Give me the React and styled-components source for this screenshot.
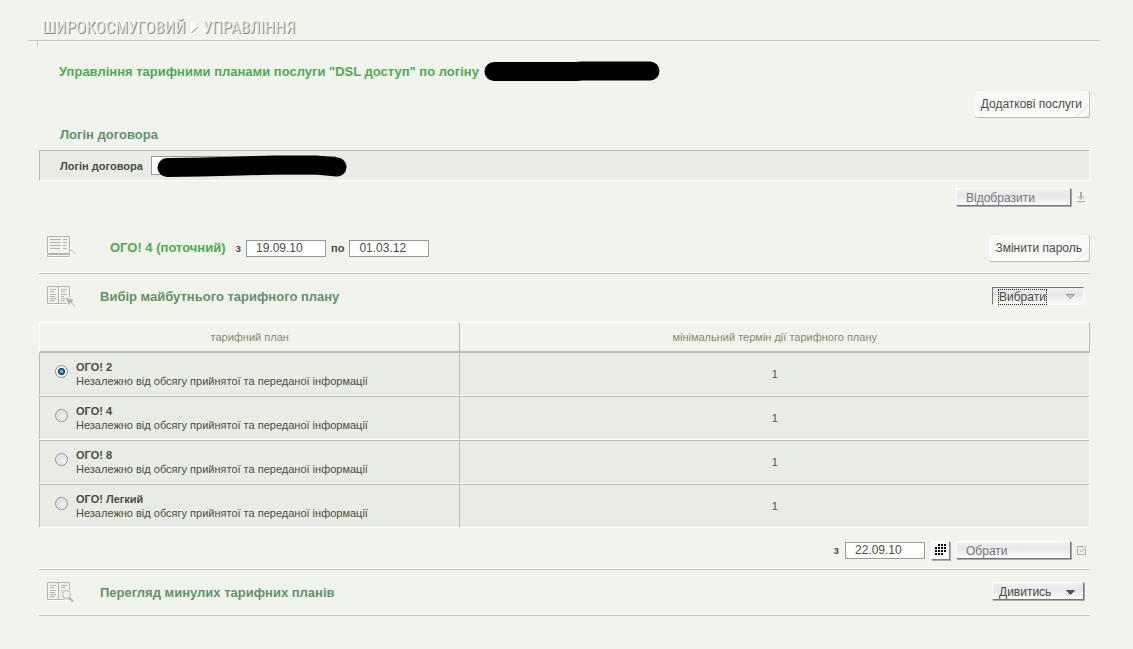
import React, { useState } from "react";
import styled, { createGlobalStyle } from "styled-components";

const GlobalStyle = createGlobalStyle`
  * {
    box-sizing: border-box;
  }
  body {
    margin: 0;
    background: #f1f4ed;
    color: #4c4c41;
    font-family: "Liberation Sans", Arial, sans-serif;
    font-size: 12px;
  }
  button,
  input {
    font-family: inherit;
  }
`;

const Page = styled.div`
  padding: 16px 33px 0 28px;
`;

const Crumbs = styled.nav`
  display: flex;
  align-items: center;
  gap: 5px;
  height: 25px;
  padding: 0 0 3px 14px;
  border-bottom: 1px solid #c3c7bf;
  box-shadow: 0 1px 0 #fff;
`;

const Crumb = styled.a`
  font-family: "Roboto Condensed", Roboto, sans-serif;
  font-size: 17px;
  font-weight: 400;
  line-height: 20px;
  color: #e4e6df;
  text-decoration: none;
  text-transform: uppercase;
  text-shadow: 1px 1px 0 #8b8d7e, -1px -1px 0 #fff;
`;

const Notch = styled.div`
  width: 2px;
  height: 6px;
  margin-left: 9px;
  background: #fff;
  border-left: 1px solid #c3c7bf;
`;

const Content = styled.main`
  margin: 0 10px 0 11px;
`;

const PageTitle = styled.h1`
  display: flex;
  align-items: center;
  gap: 5px;
  height: 20px;
  margin: 14px 0 10px;
  padding-left: 20px;
  font-size: 13px;
  color: #53a853;
`;

const Actions = styled.div`
  display: flex;
  justify-content: flex-end;
  align-items: center;
  gap: 5px;
  padding-right: ${(props) => props.$inset || "0"};
`;

const Heading = styled.h2`
  margin: 0;
  font-size: 13px;
  line-height: 16px;
  color: ${(props) => (props.$current ? "#53a853" : "#64906b")};
`;

const LoginHeading = styled(Heading)`
  margin: 9px 0 7px;
  padding-left: 21px;
`;

const LoginPanel = styled.div`
  display: flex;
  align-items: center;
  gap: 8px;
  height: 31px;
  margin-bottom: 7px;
  padding-left: 20px;
  background: #e9ece5;
  border: 1px solid #fff;
  border-top-color: #b9bdb5;
  border-left-color: #b9bdb5;
`;

const Label = styled.label`
  font-size: 11px;
  font-weight: bold;
`;

const LoginField = styled.div`
  position: relative;
  display: flex;
`;

const Input = styled.input`
  width: ${(props) => props.$width || "80px"};
  height: ${(props) => props.$height || "17px"};
  padding: 0 9px;
  background: #fff;
  border: 1px solid #999;
  border-radius: 0;
  outline: none;
  font-size: 12px;
  color: #4c4c41;
`;

const LoginMask = styled.svg`
  position: absolute;
  left: 5px;
  top: -2px;
`;

const PaperButton = styled.button`
  height: 27px;
  padding: 0 7px 0 6px;
  border: none;
  border-right: 1px solid #c1c4b6;
  border-bottom: 1px solid #b5b9a8;
  border-radius: 5px 3px 0 3px;
  background: linear-gradient(135deg, transparent calc(100% - 11px), #eceeea calc(100% - 9px), #fff calc(100% - 5px), #d9dcd2 100%), #f9f9f9;
  font-size: 12px;
  color: #4c4c41;
  cursor: pointer;
`;

const FlatButton = styled.button`
  width: 115px;
  height: 18px;
  display: flex;
  align-items: center;
  justify-content: space-between;
  padding: 2px 8px 0 9px;
  background: linear-gradient(#f1f1f3, #e7e7ea 40%, #fafafa);
  border: 1px solid #fff;
  border-right-color: #777;
  border-bottom-color: #777;
  box-shadow: 1px 1px 0 #a9aca6;
  font-size: 12px;
  line-height: 14px;
  color: #77777c;
  cursor: pointer;
`;

const ToggleButton = styled(FlatButton)`
  width: 92px;
  margin-bottom: 3px;
  padding-left: 6px;
  color: #4c4c41;
  ${(props) =>
    props.$open &&
    `
    border-color: #777 #fff #fff #777;
    box-shadow: none;
  `}
`;

const ToggleText = styled.span`
  outline: ${(props) => (props.$open ? "1px dotted #222" : "none")};
`;

const Row = styled.section`
  display: flex;
  align-items: center;
  height: ${(props) => props.$height};
  padding: 0 ${(props) => props.$inset || "0"} 0 8px;
  border-bottom: 1px solid #c3c7bf;
  box-shadow: inset 0 -1px 0 #fff;
`;

const CurrentRow = styled(Row)`
  margin-top: 17px;
`;

const PlanRow = styled(Row)`
  margin-bottom: 2px;
  border-bottom: none;
  box-shadow: none;
`;

const IconBox = styled.div`
  display: flex;
  width: 53px;
`;

const Period = styled.div`
  display: flex;
  align-items: center;
  gap: 5px;
  margin-left: 10px;
`;

const Spacer = styled.div`
  flex: 1;
`;

const Table = styled.table`
  width: 100%;
  table-layout: fixed;
  border-collapse: separate;
  border-spacing: 0;
  font-size: 11px;
`;

const HeadCell = styled.th`
  width: ${(props) => props.$width || "auto"};
  height: 31px;
  padding: 0;
  border-top: 1px solid #fff;
  border-left: 1px solid ${(props) => (props.$last ? "#b9bdb5" : "#fff")};
  border-right: ${(props) => (props.$last ? "1px solid #b9bdb5" : "none")};
  border-bottom: 2px solid #b9bdb5;
  font-weight: normal;
  color: #86886f;
`;

const Cell = styled.td`
  height: 43px;
  padding: 0 0 0 ${(props) => (props.$center ? "0" : "12px")};
  background: #e9ece5;
  border-left: 1px solid #b9bdb5;
  border-right: ${(props) => (props.$center ? "1px solid #fff" : "none")};
  border-bottom: 1px solid #fff;
  text-align: ${(props) => (props.$center ? "center" : "left")};
  color: ${(props) => (props.$center ? "#6b3f5b" : "inherit")};

  tr + tr > & {
    height: 44px;
    border-top: 1px solid #b9bdb5;
  }
`;

const Plan = styled.label`
  display: flex;
  align-items: center;
  gap: 8px;
  line-height: 14px;
`;

const PlanName = styled.strong`
  display: block;
`;

const Radio = styled.input`
  appearance: none;
  width: 13px;
  height: 13px;
  margin: 0 0 5px 3px;
  border: 1px solid #8e8f8f;
  border-radius: 50%;
  background: radial-gradient(circle at 60% 60%, #f4f4f4, #c5c9cf);
  box-shadow: inset 0 0 0 1px #f4f4f4;

  &:checked {
    background: radial-gradient(circle at 50% 50%, #5fb8e0 0 1px, #1b70a0 2px, #0d3550 3px, #f4f4f4 4px);
  }
`;

const CalendarButton = styled.button`
  display: flex;
  align-items: center;
  justify-content: center;
  width: 19px;
  height: 19px;
  padding: 0;
  background: #f8f8f8;
  border: 1px solid #fff;
  border-right-color: #888;
  border-bottom-color: #888;
  box-shadow: 1px 1px 0 #a9aca6;
  cursor: pointer;
`;

const ChooseBar = styled(Actions)`
  height: 42px;
  padding-top: 3px;
  gap: 6px;
  border-bottom: 1px solid #c3c7bf;
  box-shadow: inset 0 -1px 0 #fff;
`;

const Arrow = ({ color, edge }) => (
  <svg width="9" height="5" viewBox="0 0 9 5" aria-hidden="true">
    <path d="M0.5 0.5H8.5L4.5 4.5Z" fill={color} stroke={edge} />
  </svg>
);

const CrumbArrow = () => (
  <svg width="7" height="14" viewBox="0 0 7 14" aria-hidden="true">
    <path d="M0 1L6 7L0 13Z" fill="#fff" />
    <path d="M0.5 13L6.5 7" stroke="#777a6c" fill="none" />
  </svg>
);

const ReaderIcon = () => (
  <svg width="30" height="24" viewBox="0 0 30 24" fill="none" stroke="#b3b6ad" aria-hidden="true">
    <path d="M1.5 21.5H24.5M23.5 1V22" stroke="#fff" />
    <path d="M0.5 0.5H22.5V17.5H0.5ZM0.5 18.5H22.5V20.5H0.5Z" />
    <path d="M3 3.5H14M3 6.5H13M3 9.5H14M3 12.5H13M16 3.5H20M16 6.5H20M16 9.5H19M16 12.5H20" />
    <path d="M22 13.5L25 14.5L28.5 18" />
  </svg>
);

const BookPages = () => (
  <>
    <path d="M1 18.5H20M23.5 1V12" stroke="#fff" />
    <path d="M0.5 0.5H22.5V17.5H0.5ZM11.5 0V18" />
    <path d="M3 3.5H9M3 5.5H7M3 8.5H9M3 10.5H8M3 12.5H9M3 14.5H8M14 3.5H20M14 5.5H18M14 8.5H20M14 10.5H17M14 12.5H19M14 14.5H18" />
  </>
);

const BookSelectIcon = () => (
  <svg width="30" height="22" viewBox="0 0 30 22" fill="none" stroke="#b3b6ad" aria-hidden="true">
    <BookPages />
    <path d="M18 11L27.5 13.5L25.5 15.5L27 18L24 17L21.5 20Z" fill="#b3b6ad" stroke="#f1f4ed" />
    <path d="M23 15.5L28 20.5" />
  </svg>
);

const BookSearchIcon = () => (
  <svg width="30" height="22" viewBox="0 0 30 22" fill="none" stroke="#b3b6ad" aria-hidden="true">
    <BookPages />
    <circle cx="19.5" cy="12.5" r="5" fill="#f1f4ed" stroke="#f1f4ed" />
    <circle cx="19.5" cy="12.5" r="4" />
    <path d="M22 15.5L26 19.5" strokeWidth="2" />
  </svg>
);

const DownloadIcon = () => (
  <svg width="10" height="11" viewBox="0 0 10 11" fill="none" stroke="#adb0a7" aria-hidden="true">
    <path d="M5 0V6" strokeWidth="2" />
    <path d="M1.5 4L5 7.5L8.5 4M1 9.5H9" />
  </svg>
);

const CheckIcon = () => (
  <svg width="10" height="11" viewBox="0 0 10 11" fill="none" stroke="#adb0a7" aria-hidden="true">
    <path d="M7 1.5H0.5V9.5H8.5V4" />
    <path d="M2.5 4.5L4.5 7L9.5 1" />
  </svg>
);

const CalendarIcon = () => (
  <svg width="12" height="12" viewBox="0 0 12 12" fill="none" stroke="#000" strokeWidth="2" aria-hidden="true">
    <path d="M3 1H12M0 4H12M0 7H12M0 10H9" strokeDasharray="2 1" />
  </svg>
);

const plans = ["ОГО! 2", "ОГО! 4", "ОГО! 8", "ОГО! Легкий"];

export default function App() {
  const [plan, setPlan] = useState(plans[0]);
  const [from, setFrom] = useState("22.09.10");
  return (
    <>
      <GlobalStyle />
      <Page>
        <Crumbs>
          <Crumb href="#dsl">Широкосмуговий</Crumb>
          <CrumbArrow />
          <Crumb href="#manage">Управління</Crumb>
        </Crumbs>
        <Notch />
        <Content>
          <PageTitle>
            Управління тарифними планами послуги "DSL доступ" по логіну
            <svg width="176" height="20" viewBox="0 0 176 20" aria-hidden="true">
              <path d="M10 10.5H92L98 10H166" stroke="#000" strokeWidth="19" strokeLinecap="round" fill="none" />
            </svg>
          </PageTitle>
          <Actions>
            <PaperButton>Додаткові послуги</PaperButton>
          </Actions>
          <LoginHeading>Логін договора</LoginHeading>
          <LoginPanel>
            <Label htmlFor="login">Логін договора</Label>
            <LoginField>
              <Input id="login" $width="185px" $height="19px" />
              <LoginMask width="192" height="24" viewBox="0 0 192 24" aria-hidden="true">
                <path
                  d="M11 13.5L45 13L85 12L120 11L160 11L181 13"
                  stroke="#000"
                  strokeWidth="19"
                  strokeLinecap="round"
                  strokeLinejoin="round"
                  fill="none"
                />
              </LoginMask>
            </LoginField>
          </LoginPanel>
          <Actions $inset="4px">
            <FlatButton>Відобразити</FlatButton>
            <DownloadIcon />
          </Actions>
          <CurrentRow $height="51px">
            <IconBox>
              <ReaderIcon />
            </IconBox>
            <Period>
              <Heading $current>ОГО! 4 (поточний)</Heading>
            </Period>
            <Period>
              <Label htmlFor="start">з</Label>
              <Input id="start" defaultValue="19.09.10" />
              <Label htmlFor="end">по</Label>
              <Input id="end" defaultValue="01.03.12" />
            </Period>
            <Spacer />
            <PaperButton>Змінити пароль</PaperButton>
          </CurrentRow>
          <PlanRow $height="46px" $inset="6px">
            <IconBox>
              <BookSelectIcon />
            </IconBox>
            <Heading>Вибір майбутнього тарифного плану</Heading>
            <Spacer />
            <ToggleButton $open aria-expanded="true">
              <ToggleText $open>Вибрати</ToggleText>
              <Arrow color="#ccc" edge="#999" />
            </ToggleButton>
          </PlanRow>
          <Table>
            <thead>
              <tr>
                <HeadCell $width="40%">тарифний план</HeadCell>
                <HeadCell $last>мінімальний термін дії тарифного плану</HeadCell>
              </tr>
            </thead>
            <tbody>
              {plans.map((name) => (
                <tr key={name}>
                  <Cell>
                    <Plan>
                      <Radio
                        type="radio"
                        name="plan"
                        checked={plan === name}
                        onChange={() => setPlan(name)}
                      />
                      <span>
                        <PlanName>{name}</PlanName>
                        Незалежно від обсягу прийнятої та переданої інформації
                      </span>
                    </Plan>
                  </Cell>
                  <Cell $center>1</Cell>
                </tr>
              ))}
            </tbody>
          </Table>
          <ChooseBar $inset="3px">
            <Label htmlFor="from">з</Label>
            <Input id="from" value={from} onChange={(e) => setFrom(e.target.value)} />
            <CalendarButton aria-label="Календар">
              <CalendarIcon />
            </CalendarButton>
            <FlatButton>Обрати</FlatButton>
            <CheckIcon />
          </ChooseBar>
          <Row $height="46px" $inset="6px">
            <IconBox>
              <BookSearchIcon />
            </IconBox>
            <Heading>Перегляд минулих тарифних планів</Heading>
            <Spacer />
            <ToggleButton aria-expanded="false">
              <ToggleText>Дивитись</ToggleText>
              <Arrow color="#555" edge="#555" />
            </ToggleButton>
          </Row>
        </Content>
      </Page>
    </>
  );
}
